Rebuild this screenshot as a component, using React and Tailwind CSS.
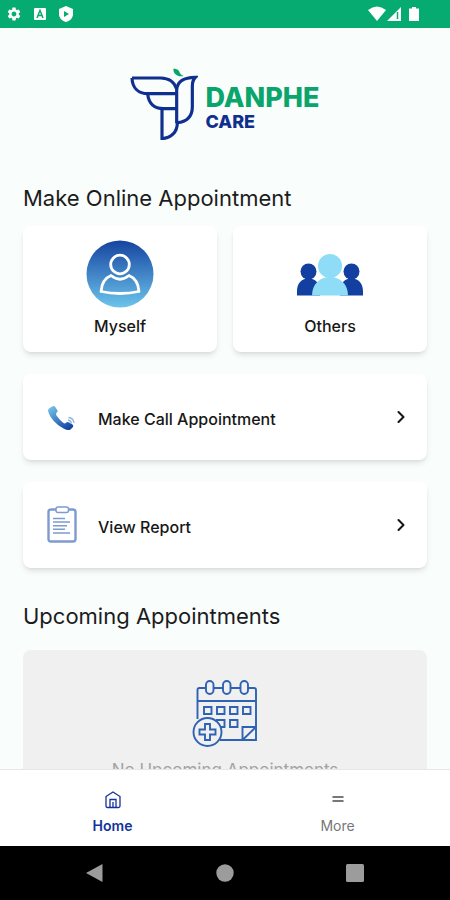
import { ChevronRight } from "lucide-react";
import { MdSettings } from "react-icons/md";

function StatusBar() {
  return (
    <div className="h-7 flex-shrink-0 bg-[#06ab72] flex items-center justify-between pl-[6px] pr-7 text-white">
      <div className="flex items-center gap-[10px]">
        <MdSettings className="w-4 h-4" />
        <svg viewBox="0 0 16 16" className="w-4 h-4">
          <rect x="2" y="2" width="12" height="12" rx="1" fill="#fff" />
          <path d="M5 12 8 4.500 11 12M6 9.500h4" fill="none" stroke="#06ab72" strokeWidth="1.500" />
        </svg>
        <svg viewBox="0 0 16 16" className="w-4 h-4">
          <path d="M8 0 15 3v5c0 4-3 7-7 8-4-1-7-4-7-8V3z" fill="#fff" />
          <path d="M6 5l5 3-5 3z" fill="#06ab72" />
        </svg>
      </div>
      <div className="flex items-center">
        <svg viewBox="0 0 18 16" className="w-[18px] h-4">
          <path d="M0 4Q9-3 18 4L9 15z" fill="#fff" />
        </svg>
        <svg viewBox="0 0 16 16" className="w-4 h-4">
          <path d="M15 1v14H1z" fill="#fff" />
          <path d="M11.500 6v7" stroke="#06ab72" strokeWidth="1.500" />
        </svg>
        <svg viewBox="0 0 20 16" className="w-5 h-4">
          <path d="M10 1h4v1.500h3V15H7V2.500h3z" fill="#fff" />
        </svg>
      </div>
    </div>
  );
}

function Logo() {
  return (
    <div className="flex items-center justify-center gap-[7px]">
      <svg viewBox="30 20 204 219" className="w-[68px] h-[73px]">
        <g fill="none" stroke="#10308f" strokeWidth="9.500">
          <path d="M36 53H122Q160 54 170 86V189" />
          <path d="M36 53C37 82 54 100 84 100H168" />
          <path d="M83 101C86 130 104 145 130 145H168" />
          <path d="M126 145V235C154 233 172 215 172 187" />
          <path d="M170 86C174 62 190 52 226 51Q217 60 217 78V140C217 168 200 186 172 187" />
        </g>
        <path d="M160 25C173 24 178 31 180 39 183 44 187 46 191 47 172 50 160 41 160 25z" fill="#0ba56c" />
      </svg>
      <div className="pt-2">
        <p className="text-[27px] leading-7 font-extrabold text-[#0ba56c]">DANPHE</p>
        <p className="text-[18px] leading-5 font-extrabold text-[#10308f]">CARE</p>
      </div>
    </div>
  );
}

function MyselfIcon() {
  return (
    <svg viewBox="0 0 68 68" className="w-[68px] h-[68px]">
      <defs>
        <linearGradient id="myself" x1="0" y1="0" x2="0" y2="1">
          <stop offset="0" stopColor="#1644a0" />
          <stop offset="1" stopColor="#6cc4ec" />
        </linearGradient>
      </defs>
      <circle cx="34" cy="34" r="33.500" fill="url(#myself)" />
      <g fill="none" stroke="#fff" strokeWidth="2.800" strokeLinejoin="round">
        <circle cx="34" cy="24.500" r="9.300" />
        <path d="M25 35.500Q34 43 43 35.500C49 38 52.500 44 53 51.500Q34 55.500 15 51.500C15.500 44 19 38 25 35.500z" />
      </g>
    </svg>
  );
}

function OthersIcon() {
  return (
    <svg viewBox="0 0 68 68" className="w-[68px] h-[68px]">
      <g fill="#1340a0">
        <circle cx="12.500" cy="31.500" r="8" />
        <circle cx="55.500" cy="31.500" r="8" />
        <path d="M1 55.500V51C1 43 6 38.500 12.500 38.500S24 43 24 51v4.500zM44 55.500V51C44 43 49 38.500 55.500 38.500S67 43 67 51v4.500z" />
      </g>
      <path d="M16 55.500C16 44 24 37 34 37S52 44 52 55.500z" fill="#8edcf6" />
      <circle cx="34" cy="26" r="12" fill="#8edcf6" />
    </svg>
  );
}

function PhoneIcon() {
  return (
    <svg viewBox="0 0 30 30" className="w-[30px] h-[30px]">
      <defs>
        <linearGradient id="phone" x1="0" y1="0" x2="0.700" y2="1">
          <stop offset="0" stopColor="#7ccbed" />
          <stop offset="1" stopColor="#1746a5" />
        </linearGradient>
      </defs>
      <path
        d="M2 6.500 6 4Q7.500 3.500 8.300 5L10.500 8.500Q11 10 9.500 10.800 8.500 12 9.500 13.500 12.500 18 16.500 21 18 22 19 20.800 20.500 19.500 22 20.500L25.500 22.500Q26.800 23.500 26 25L23.500 27.500Q21 29 17 26.800C9 22.500 3 16 1 9Q.8 7.500 2 6.500z"
        fill="url(#phone)"
      />
      <path d="M21 18q3 .5 3.500 3.500M21.500 15.500q5 .5 5.500 5.500" fill="none" stroke="#8fb8dd" strokeWidth="1.300" />
    </svg>
  );
}

function ReportIcon() {
  return (
    <svg viewBox="0 0 30 38" className="w-[30px] h-[38px]">
      <g fill="none" stroke="#7e9bd0">
        <rect x="1.500" y="3.500" width="27" height="32" rx="2.500" strokeWidth="2.400" />
        <path d="M6 12.500h12M6 16.100h17M6 19.700h14M6 23.300h12M6 26.900h17" strokeWidth="1.500" />
        <rect x="9" y="1" width="12.500" height="5.500" rx="2" fill="#fff" strokeWidth="1.500" />
      </g>
    </svg>
  );
}

function CalendarIcon() {
  return (
    <svg viewBox="0 0 66 68" className="w-[66px] h-[68px]">
      <g fill="none" stroke="#2f62b3" strokeWidth="1.900">
        <path d="M5.500 39V10Q5.500 8 7.500 8H62Q64 8 64 10V60H28M5.500 21H64" />
        <g fill="#f0f0f0">
          <rect x="14" y="1" width="7.500" height="13" rx="3.700" />
          <rect x="31" y="1" width="7.500" height="13" rx="3.700" />
          <rect x="48.500" y="1" width="7.500" height="13" rx="3.700" />
        </g>
        <path d="M12 27h7.500v7H12zM25 27h7.500v7H25zM38 27h7.500v7H38zM51 27h7.500v7H51zM25 40h7.500v7H25zM38 40h7.500v7H38z" />
        <path d="M50.500 60V47H64M50.500 60 64 47" />
        <circle cx="15.500" cy="52" r="14" fill="#f0f0f0" />
        <path d="M13 44h5v5.500h5.500v5H18V60h-5v-5.500H7.500v-5H13z" />
      </g>
    </svg>
  );
}

function PersonCard({ label, icon }) {
  return (
    <button className="flex-1 h-[126px] bg-white rounded-lg shadow-md flex flex-col items-center pt-[14px] gap-2">
      {icon}
      <span className="text-base leading-5 font-medium">{label}</span>
    </button>
  );
}

function ActionCard({ label, icon }) {
  return (
    <button className="w-full h-[86px] bg-white rounded-lg shadow-md flex items-center pl-6 pr-4 text-left">
      <span className="w-[51px]">{icon}</span>
      <span className="flex-1 pt-1 text-base leading-5 font-medium">{label}</span>
      <ChevronRight size={20} strokeWidth={2.5} />
    </button>
  );
}

function SectionTitle({ children }) {
  return <h2 className="text-[22px] leading-7 font-normal text-[#1c1c1c]">{children}</h2>;
}

function BottomNav() {
  return (
    <nav className="h-[77px] flex-shrink-0 bg-white border-t border-gray-200 flex text-sm leading-5">
      <a href="#home" className="flex-1 flex flex-col items-center pt-5 gap-[6px] font-semibold text-[#14329b]">
        <svg viewBox="0 0 20 20" className="w-5 h-5" fill="none" stroke="currentColor" strokeWidth="1.300">
          <path d="M3 6.500 10 2l7 4.500V16q0 1.500-1.500 1.500h-11Q3 17.500 3 16z" />
          <path d="M7 17.500V9.500h6v8M10 12v5.500" />
        </svg>
        Home
      </a>
      <a href="#more" className="flex-1 flex flex-col items-center pt-5 gap-[6px] text-[#777777]">
        <svg viewBox="0 0 20 20" className="w-5 h-5" stroke="currentColor" strokeWidth="1.800">
          <path d="M4.500 7h11M4.500 11h11" />
        </svg>
        More
      </a>
    </nav>
  );
}

function SystemBar() {
  return (
    <div className="h-[54px] flex-shrink-0 bg-black flex items-center justify-between px-[85px] text-[#9c9c9c]">
      <button aria-label="Back">
        <svg viewBox="0 0 20 20" className="w-5 h-5" fill="currentColor">
          <path d="M17.500 1v18L1 10z" />
        </svg>
      </button>
      <button aria-label="Home screen">
        <svg viewBox="0 0 20 20" className="w-5 h-5" fill="currentColor">
          <circle cx="10" cy="10" r="8.700" />
        </svg>
      </button>
      <button aria-label="Recent apps">
        <svg viewBox="0 0 20 20" className="w-5 h-5" fill="currentColor">
          <rect x="1" y="1" width="18" height="18" rx="1.500" />
        </svg>
      </button>
    </div>
  );
}

export default function App() {
  return (
    <div className="h-screen flex flex-col bg-[#f9fdfc] text-[#171717] font-[Inter,sans-serif]">
      <StatusBar />
      <main className="flex-1 min-h-0 overflow-y-auto [scrollbar-width:none] px-[23px] pt-[39px]">
        <Logo />
        <section className="mt-11">
          <SectionTitle>Make Online Appointment</SectionTitle>
          <div className="mt-[14px] flex gap-4">
            <PersonCard label="Myself" icon={<MyselfIcon />} />
            <PersonCard label="Others" icon={<OthersIcon />} />
          </div>
          <div className="mt-[22px] flex flex-col gap-[22px]">
            <ActionCard label="Make Call Appointment" icon={<PhoneIcon />} />
            <ActionCard label="View Report" icon={<ReportIcon />} />
          </div>
        </section>
        <section className="mt-[34px] pb-6">
          <SectionTitle>Upcoming Appointments</SectionTitle>
          <div className="mt-5 rounded-lg bg-[#f0f0f0] flex flex-col items-center pt-[30px] pb-8 gap-3">
            <CalendarIcon />
            <p className="text-[17px] leading-5 text-[#a3a3a3]">No Upcoming Appointments</p>
          </div>
        </section>
      </main>
      <BottomNav />
      <SystemBar />
    </div>
  );
}
